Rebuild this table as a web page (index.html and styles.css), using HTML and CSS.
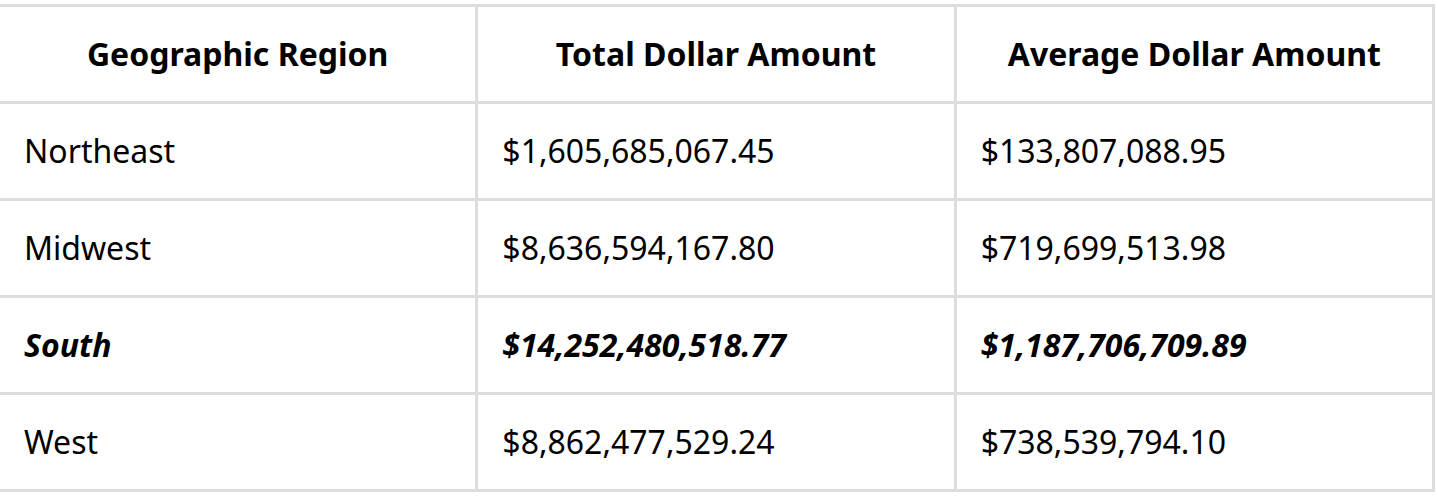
FILE: index.html
```html
<!DOCTYPE html>
<html>
<head>
<meta charset="utf-8">
<link rel="stylesheet" href="styles.css">
</head>
<body>
<table class="data">
  <thead>
    <tr><th>Geographic Region</th><th>Total Dollar Amount</th><th>Average Dollar Amount</th></tr>
  </thead>
  <tbody>
    <tr><td>Northeast</td><td>$1,605,685,067.45</td><td>$133,807,088.95</td></tr>
    <tr><td>Midwest</td><td>$8,636,594,167.80</td><td>$719,699,513.98</td></tr>
    <tr class="hl"><td>South</td><td>$14,252,480,518.77</td><td>$1,187,706,709.89</td></tr>
    <tr><td>West</td><td>$8,862,477,529.24</td><td>$738,539,794.10</td></tr>
  </tbody>
</table>
</body>
</html>
```
FILE: styles.css
```css
html, body {
  margin: 0;
  padding: 0;
  background: #fff;
  overflow: hidden;
}
body {
  padding-top: 4px;
  font-family: "Noto Sans", "Open Sans", sans-serif;
  color: #000;
}
.data {
  border-collapse: collapse;
  margin-left: -3px;
  width: 1438px;
  table-layout: fixed;
  font-size: 32px;
}
.data th, .data td {
  border: 3px solid #dddddd;
  height: 97px;
  padding: 0 24px;
  box-sizing: border-box;
  line-height: 44px;
  vertical-align: middle;
}
.data th {
  font-weight: 700;
  text-align: center;
}
.data td {
  text-align: left;
  font-weight: 400;
}
.data tr.hl td {
  font-weight: 700;
  font-style: italic;
}
```
